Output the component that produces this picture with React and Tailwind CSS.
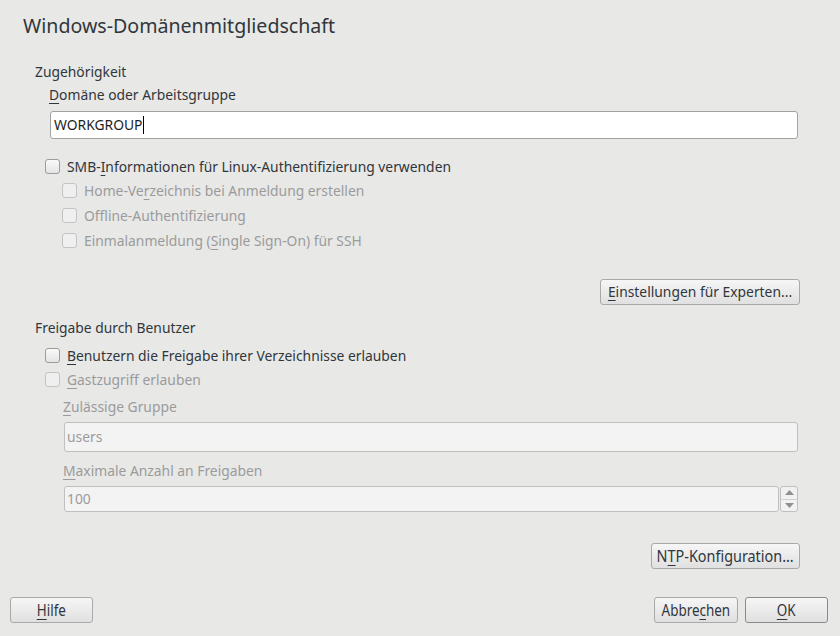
import React from 'react';

const U = ({ children }) => <span className="underline underline-offset-[3px] decoration-1">{children}</span>;

const Check = ({ disabled }) => (
    <span
        className={`inline-block w-[15px] h-[15px] rounded-[3px] border shrink-0 ${
            disabled ? 'border-[#c4c4c4] bg-[#efefef]' : 'border-[#9c9c9c] bg-gradient-to-b from-[#fafafa] to-[#e4e4e4]'
        }`}
    />
);

const CheckRow = ({ disabled, children, className = '' }) => (
    <div className={`flex items-center gap-[7px] h-[25px] ${className}`}>
        <Check disabled={disabled} />
        <span className={disabled ? 'text-[#9b9b9b]' : 'text-[#31363b]'}>{children}</span>
    </div>
);

const Button = ({ children, className = '', isDefault }) => (
    <button
        className={`h-[26px] rounded-[3px] border bg-gradient-to-b from-[#f6f6f6] to-[#e0e0e0] text-[#31363b] flex items-center justify-center ${
            isDefault ? 'border-[#8a8a8a]' : 'border-[#a9a9a9]'
        } ${className}`}
    >
        {children}
    </button>
);

// the lower buttons use a condensed face in the reference
const Narrow = ({ children, className = 'scale-x-[0.84]' }) => (
    <span className={`inline-block text-[16px] whitespace-nowrap ${className}`}>{children}</span>
);

export default function App() {
    return (
        <div className="w-[840px] h-[636px] bg-[#e8e8e7] flex flex-col text-[13.85px] leading-[20px] text-[#31363b] font-['Noto_Sans',sans-serif]">
            {/* Title */}
            <h1 className="ml-[23px] mt-[13px] text-[19.6px] leading-[26px] text-[#31363b]">Windows-Domänenmitgliedschaft</h1>

            {/* Zugehörigkeit */}
            <div className="ml-[35px] mr-[40px] mt-[23px] flex flex-col">
                <div>Zugehörigkeit</div>
                <div className="ml-[14px] mt-[3px]">
                    <U>D</U>omäne oder Arbeitsgruppe
                </div>
                <div className="ml-[15px] mr-[2px] mt-[6px] h-[28px] bg-white border border-[#a3a3a3] rounded-[3px] flex items-center px-[3px] text-[#1e1e1e]">
                    WORKGROUP<span className="inline-block w-px h-[18px] bg-black ml-px" />
                </div>
                <CheckRow className="ml-[10px] mt-[15px]">
                    SMB-<U>I</U>nformationen für Linux-Authentifizierung verwenden
                </CheckRow>
                <div className="ml-[27px] -mt-px flex flex-col">
                    <CheckRow disabled>Home-Ve<U>r</U>zeichnis bei Anmeldung erstellen</CheckRow>
                    <CheckRow disabled>Off<U>l</U>ine-Authentifizierung</CheckRow>
                    <CheckRow disabled>Einmalanmeldung (<U>S</U>ingle Sign-On) für SSH</CheckRow>
                </div>
                <div className="flex justify-end mt-[26px]">
                    <Button className="w-[200px]">
                        <U>E</U>instellungen für Experten...
                    </Button>
                </div>
            </div>

            {/* Freigabe */}
            <div className="ml-[35px] mr-[40px] mt-[13px] flex flex-col">
                <div>Freigabe durch Benutzer</div>
                <CheckRow className="ml-[10px] mt-[5px]">
                    <U>B</U>enutzern die Freigabe ihrer Verzeichnisse erlauben
                </CheckRow>
                <CheckRow disabled className="ml-[10px] -mt-px">
                    <U>G</U>astzugriff erlauben
                </CheckRow>
                <div className="ml-[28px] mt-[5px] text-[#9b9b9b]">
                    <U>Z</U>ulässige Gruppe
                </div>
                <div className="ml-[29px] mr-[2px] mt-[5px] h-[30px] bg-[#f3f3f3] border border-[#c0c0c0] rounded-[3px] flex items-center px-[2px] text-[#9b9b9b]">
                    users
                </div>
                <div className="ml-[28px] mt-[9px] text-[#9b9b9b]">
                    <U>M</U>aximale Anzahl an Freigaben
                </div>
                <div className="ml-[29px] mr-[2px] mt-[5px] h-[26px] flex">
                    <div className="flex-1 bg-[#f3f3f3] border border-[#c0c0c0] rounded-[3px] flex items-center px-[2px] text-[#9b9b9b]">
                        100
                    </div>
                    <div className="w-[18px] ml-px border border-[#c0c0c0] rounded-[3px] bg-[#f1f1f1] flex flex-col">
                        <div className="flex-1 flex items-center justify-center border-b border-[#d0d0d0]">
                            <svg width="9" height="5" viewBox="0 0 9 5"><path d="M0 5 L4.5 0 L9 5 Z" fill="#8f8f8f" /></svg>
                        </div>
                        <div className="flex-1 flex items-center justify-center">
                            <svg width="9" height="5" viewBox="0 0 9 5"><path d="M0 0 L4.5 5 L9 0 Z" fill="#8f8f8f" /></svg>
                        </div>
                    </div>
                </div>
                <div className="flex justify-end mt-[31px]">
                    <Button className="w-[149px]">
                        <Narrow className="scale-x-[0.9]">
                            N<U>T</U>P-Konfiguration...
                        </Narrow>
                    </Button>
                </div>
            </div>

            {/* Footer */}
            <div className="mt-[28px] ml-[10px] mr-[12px] flex items-center">
                <Button className="w-[83px]">
                    <Narrow>
                        <U>H</U>ilfe
                    </Narrow>
                </Button>
                <div className="flex-1" />
                <Button className="w-[84px]">
                    <Narrow>
                        Abbre<U>c</U>hen
                    </Narrow>
                </Button>
                <Button isDefault className="w-[83px] ml-[7px] from-[#ececec] to-[#d9d9d9]">
                    <Narrow>
                        <U>O</U>K
                    </Narrow>
                </Button>
            </div>
        </div>
    );
}
